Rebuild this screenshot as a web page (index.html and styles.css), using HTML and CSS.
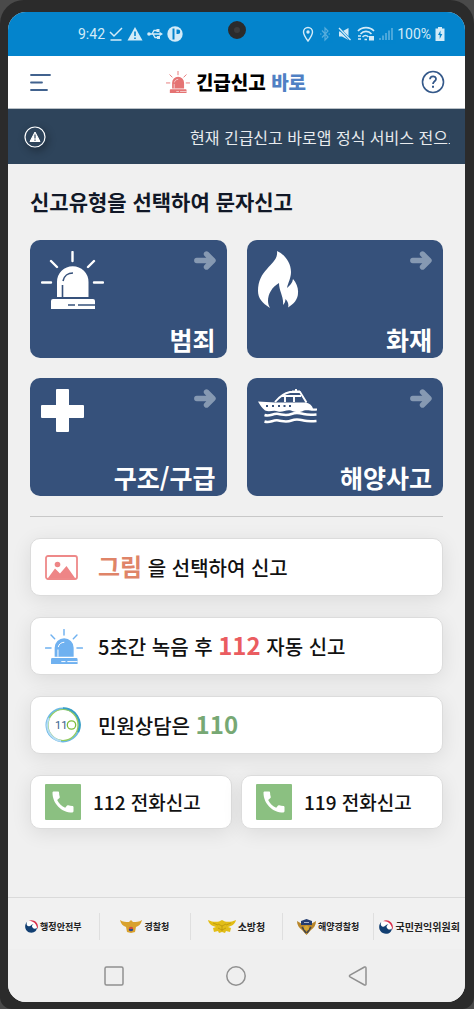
FILE: index.html
```html
<!DOCTYPE html>
<html lang="ko">
<head>
  <meta charset="UTF-8">
  <meta name="viewport" content="width=device-width, initial-scale=1.0">
  <title>긴급신고 바로</title>
  <link rel="stylesheet" href="styles.css">
</head>
<body>
  <!-- shared icons -->
  <svg class="sprite" aria-hidden="true">
    <symbol id="siren" viewBox="0 0 63 58">
      <path d="M31.5 1v9M10 10l6 6M53 10l-6 6M1 31.5h9M53 31.5h9" fill="none" stroke="currentColor" stroke-width="2.4" stroke-linecap="round"/>
      <path d="M16 46V31a15.7 15.7 0 0 1 31.5 0v15zM12 48h40a2 2 0 0 1 2 2v8H10v-8a2 2 0 0 1 2-2z" fill="currentColor"/>
      <path d="M21.5 46V34M22 30c1-5 5-8 10-8M27 54h7M37 54h17" fill="none" stroke="var(--cut)" stroke-width="1.6"/>
    </symbol>
    <symbol id="arrow" viewBox="0 0 22 19">
      <path d="M2.8 9.500h15M12.500 3l6.500 6.500-6.500 6.500" fill="none" stroke="currentColor" stroke-width="5.400" stroke-linecap="round" stroke-linejoin="round"/>
    </symbol>
    <symbol id="phone" viewBox="0 0 24 24">
      <path d="M20.010 15.380c-1.230 0-2.420-.2-3.530-.56a.98.98 0 0 0-1.010.24l-1.570 1.970c-2.830-1.350-5.480-3.900-6.890-6.830l1.950-1.660c.27-.28.35-.67.24-1.020-.37-1.110-.56-2.300-.56-3.530 0-.54-.45-.99-.99-.99H4.190C3.650 3 3 3.240 3 3.990 3 13.280 10.730 21 20.010 21c.71 0 .99-.63.99-1.180v-3.450c0-.54-.45-.99-.99-.99z" fill="currentColor"/>
    </symbol>
    <symbol id="taegeuk" viewBox="0 0 24 24">
      <circle cx="12" cy="12" r="11" fill="#fff"/>
      <path d="M7 2C16-3 27 6 23 17c-1-7-4-12-9-14-3-1-5-1-7-1z" fill="#d8304b"/>
      <path d="M4 3C-3 10 0 23 12 23.500c6 0 10-4 10-9.500-2 3-6 3-8 0-2-2-1-5 2-6-4-1-5 4-9 3.500C3 11 2 7 4 3z" fill="#123f72"/>
    </symbol>
  </svg>

  <div class="screen">
    <div class="status-bar">
      <div class="status-group">
        <span>9:42</span>
        <svg width="14" height="16" viewBox="0 0 14 16"><path d="M1 6l4 4 8-8M1.500 14h11" fill="none" stroke="currentColor" stroke-width="1.500"/></svg>
        <svg width="16" height="16" viewBox="0 0 16 16"><path d="M8 1l7.500 13.500H.5z" fill="currentColor"/><path d="M8 5.500v4.500M8 11.500v1.600" stroke="#0484cc" stroke-width="1.600"/></svg>
        <svg width="16" height="16" viewBox="0 0 16 16"><path d="M1 8h12M5 8l2-3.500h3M6 8l2 3.500h3" fill="none" stroke="currentColor" stroke-width="1.300"/><circle cx="2" cy="8" r="1.800" fill="currentColor"/><path d="M12.500 5.800L16 8l-3.500 2.200zM9.500 3h3v3h-3zM10 10h3v3h-3z" fill="currentColor"/></svg>
        <svg width="16" height="16" viewBox="0 0 16 16"><circle cx="8" cy="8" r="7.700" fill="currentColor"/><path d="M5.500 2.500h2v11h-2zM9.500 3.500h1.500a2 2 0 0 1 0 4.500H9.500z" fill="#0484cc"/></svg>
      </div>
      <span class="camera"></span>
      <div class="status-group">
        <svg width="12" height="16" viewBox="0 0 12 16"><path d="M6 15C3 11 1.500 8.500 1.500 6a4.500 4.500 0 0 1 9 0c0 2.500-1.500 5-4.500 9z" fill="none" stroke="currentColor" stroke-width="1.400"/><circle cx="6" cy="6" r="1.700" fill="currentColor"/></svg>
        <svg class="faded wide" width="10" height="16" viewBox="0 0 10 16"><path d="M2 4.500l6 6.500-3 3V2l3 3-6 6.500M0 8h1.500M8.500 8H10" fill="none" stroke="currentColor" stroke-width="1.200"/></svg>
        <svg class="wide" width="13" height="16" viewBox="0 0 13 16"><path d="M1 5.500h3L10.500 2v12L4 10.500H1z" fill="currentColor"/><path d="M.5 2l12 12" stroke="#0484cc" stroke-width="2.600"/><path d="M1 2l11.500 12" stroke="currentColor" stroke-width="1.300"/></svg>
        <svg width="18" height="16" viewBox="0 0 18 16"><path d="M1 5c4-4.500 12-4.500 16 0M3.500 8c3-3.500 8-3.500 11 0M5.500 11c2-2 4-2 6 0" fill="none" stroke="currentColor" stroke-width="1.600"/><path d="M1 10h3M1 13h3M7.500 13.500h2.500" stroke="currentColor" stroke-width="1.500"/><path d="M12 10h5v4.500h-5z" fill="currentColor"/></svg>
        <svg class="faded" width="14" height="16" viewBox="0 0 14 16"><path d="M1 14v-2M4 14V9.500M7 14V7M10 14V4.500M13 14V2" stroke="currentColor" stroke-width="1.700"/></svg>
        <span>100%</span>
        <svg width="10" height="16" viewBox="0 0 10 16"><path d="M3 1h4v1.500h2.500V15h-9V2.500H3z" fill="currentColor"/><path d="M5.500 4.500L3 9h1.700v4L7.300 8H5.500z" fill="#0484cc"/></svg>
      </div>
    </div>

    <header class="app-header">
      <button class="icon-button" type="button" aria-label="메뉴">
        <svg width="21" height="20" viewBox="0 0 21 20"><path d="M1 3h19M1 10.500h11M1 18h16" stroke="#41628e" stroke-width="1.800" stroke-linecap="round"/></svg>
      </button>
      <h1 class="brand">
        <svg class="brand-icon"><use href="#siren"/></svg>
        <span>긴급신고 <span class="brand-blue">바로</span></span>
      </h1>
      <button class="icon-button" type="button" aria-label="도움말">
        <svg width="24" height="24" viewBox="0 0 24 24" fill="none" stroke="#35598a"><circle cx="12" cy="12" r="10.500" stroke-width="1.600"/><path d="M9 9.300c.2-4 6-3.700 6-.3 0 2.300-3 2.300-3 5" stroke-width="1.800"/><path d="M12 15.800v2" stroke-width="2"/></svg>
      </button>
    </header>

    <div class="notice">
      <svg class="notice-icon" width="22" height="22" viewBox="0 0 22 22"><circle cx="11" cy="11" r="10" fill="none" stroke="#fff" stroke-width="1.200"/><path d="M11 6l5 9.500H6z" fill="#fff" stroke="#fff" stroke-linejoin="round"/><path d="M11 8.500v4M11 13.500v1.200" stroke="#2e445b" stroke-width="1.200"/></svg>
      <!-- ticker line, runs out of its box on the right -->
      <p class="notice-text">현재 긴급신고 바로앱 정식 서비스 전으로</p>
    </div>

    <main>
      <h2>신고유형을 선택하여 문자신고</h2>

      <div class="tiles">
        <button class="tile" type="button">
          <svg width="63" height="58"><use href="#siren"/></svg>
          <svg class="tile-arrow"><use href="#arrow"/></svg>
          <span class="tile-label">범죄</span>
        </button>
        <button class="tile" type="button">
          <svg width="41" height="58" viewBox="0 0 41 58"><path d="M19 0C26 3 33 11 33 21c0 6-3 11-4 16 3-3 5.500-5 6-9 3.500 4 5.500 9 5 14 0 6-4 11-10 14.500 1-3 0-6-2.500-8.500 0 2.500-1 4.500-2.500 6 1-8-4-14-4-22-7 4-11 11-11 18 0 3 1 5 2 7C4 52 0 47 0 40 0 30 4 23 9 18c5-6 11-10 10-18z" fill="#fff"/></svg>
          <svg class="tile-arrow"><use href="#arrow"/></svg>
          <span class="tile-label">화재</span>
        </button>
        <button class="tile" type="button">
          <svg width="43" height="43" viewBox="0 0 43 43"><path d="M16 0h11a1 1 0 0 1 1 1v15h14a1 1 0 0 1 1 1v11a1 1 0 0 1-1 1H28v13a1 1 0 0 1-1 1H16a1 1 0 0 1-1-1V29H1a1 1 0 0 1-1-1V17a1 1 0 0 1 1-1h14V1a1 1 0 0 1 1-1z" fill="#fff"/></svg>
          <svg class="tile-arrow"><use href="#arrow"/></svg>
          <span class="tile-label">구조/구급</span>
        </button>
        <button class="tile" type="button">
          <svg width="59" height="35" viewBox="0 0 59 35">
            <path d="M0 12.500l17 1h31c4 1 6 3 7 6h4v2c-6 1-8-1-13 0-4 2-8 2-13 0-5-1-8 2-13 1-5-2-8 1-13-1C4 19 2 16 0 12.500z" fill="#fff"/>
            <path d="M17 13c5-6 10-9 15-10h10l6.500 10.500M25 7h18M27 7v6M36 7v6M34 2.500h8M38 0v3" fill="none" stroke="#fff" stroke-width="1.900"/>
            <path d="M8 17h2M14 17h2M20 17h2M25.500 17h2M31 17h2" stroke="#36517b" stroke-width="2"/>
            <path d="M6.500 26c6 2 8-2 14-1s8 2 13 0 8-1 12 0 7 1 13 .5M6.500 32.500c6 2 8-2 14-1s8 2 13 0 8-1 12 0 7 1 13 .5" fill="none" stroke="#fff" stroke-width="2.500"/>
          </svg>
          <svg class="tile-arrow"><use href="#arrow"/></svg>
          <span class="tile-label">해양사고</span>
        </button>
      </div>

      <hr>

      <div class="cards">
        <button class="card" type="button">
          <span class="card-icon"><svg width="33" height="25" viewBox="0 0 33 25"><rect x="1" y="1" width="31" height="23" rx="2" fill="#fff" stroke="#ee8989" stroke-width="1.800"/><circle cx="12.500" cy="9.500" r="2.800" fill="#ee8586"/><path d="M3 23l7-9.500 5 5L21.500 11 30 23z" fill="#ee8586"/></svg></span>
          <span><strong class="orange">그림</strong> 을 선택하여 신고</span>
        </button>
        <button class="card" type="button">
          <span class="card-icon blue"><svg width="38" height="35"><use href="#siren"/></svg></span>
          <span>5초간 녹음 후 <strong class="red">112</strong> 자동 신고</span>
        </button>
        <a class="card" href="tel:110">
          <span class="card-icon"><svg width="36" height="36" viewBox="0 0 36 36">
            <circle cx="18" cy="18" r="16.500" fill="none" stroke="#6cb9e4" stroke-width="2"/>
            <path d="M18 1.500A16.500 16.500 0 0 1 33 25" fill="none" stroke="#3a9fc4" stroke-width="2.400"/>
            <ellipse cx="18" cy="18" rx="15" ry="15.500" fill="none" stroke="#93cc61" stroke-width="1.200"/>
            <path d="M4 11a16 16 0 0 0 12 23" fill="none" stroke="#b6dcf5" stroke-width="2"/>
            <text x="10" y="22" class="badge-number">11</text>
            <circle cx="26.500" cy="18" r="4.200" fill="none" stroke="#80bd3d" stroke-width="1.300"/>
          </svg></span>
          <span>민원상담은 <strong class="green">110</strong></span>
        </a>
        <div class="calls">
          <a class="card call" href="tel:112">
            <span class="call-icon"><svg width="28" height="28"><use href="#phone"/></svg></span>
            <span>112 전화신고</span>
          </a>
          <a class="card call" href="tel:119">
            <span class="call-icon"><svg width="28" height="28"><use href="#phone"/></svg></span>
            <span>119 전화신고</span>
          </a>
        </div>
      </div>
    </main>

    <footer class="agencies">
      <div class="agency"><svg width="13" height="13"><use href="#taegeuk"/></svg><span>행정안전부</span></div>
      <div class="agency">
        <svg width="22" height="13" viewBox="0 0 22 13"><path d="M0 0c3 2 6 2 9 2l2-2 2 2c3 0 6 0 9-2-1 4-3 6-6 7l-1 5-4 1-4-1-1-5C3 6 1 4 0 0z" fill="#d9a22e"/><circle cx="11" cy="9" r="2.200" fill="#cc4c3f"/><path d="M8.800 9a2.200 2.200 0 0 0 4.400 0z" fill="#284d90"/></svg>
        <span>경찰청</span>
      </div>
      <div class="agency">
        <svg width="28" height="13" viewBox="0 0 28 13"><path d="M0 0c4 2 8 2 11 1.500L14 0l3 1.500C20 2 24 2 28 0c-1 4-4 6-8 7l3 1-1 4-4-1-1 2-3-1-3 1-1-2-4 1-1-4 3-1C4 6 1 4 0 0z" fill="#e2bd16"/><path d="M10 4l4 2 4-2M10 8l4 2 4-2M14 6v5M5 3l5 2M23 3l-5 2" fill="none" stroke="#b38f0c" stroke-width=".7"/></svg>
        <span class="large">소방청</span>
      </div>
      <div class="agency">
        <svg width="19" height="16" viewBox="0 0 19 16"><path d="M0 2l5 3h9l5-3c0 4-2 7-5 9l-4.500 5L5 11C2 9 0 6 0 2z" fill="#b8862b"/><path d="M4 2l5.500-2L15 2v4H4z" fill="#243d70"/><path d="M7 3.500h5" stroke="#a8b3cc"/><path d="M5 8l4 6M14 8l-4 6" stroke="#44474c" stroke-width="1.500"/><circle cx="9.500" cy="9" r="2.500" fill="#d5a735"/></svg>
        <span>해양경찰청</span>
      </div>
      <div class="agency"><svg width="14" height="14"><use href="#taegeuk"/></svg><span class="large">국민권익위원회</span></div>
    </footer>

    <nav class="system-nav">
      <button class="icon-button" type="button" aria-label="최근 앱"><svg width="20" height="20" viewBox="0 0 20 20"><rect x="1" y="1" width="18" height="18" rx="1.500"/></svg></button>
      <button class="icon-button" type="button" aria-label="홈"><svg width="20" height="20" viewBox="0 0 20 20"><circle cx="10" cy="10" r="9.200"/></svg></button>
      <button class="icon-button" type="button" aria-label="뒤로"><svg width="20" height="20" viewBox="0 0 20 20"><path d="M16.500 1L2 9.200q-1.200.8 0 1.600L16.500 19q1.500.5 1.500-1V2q0-1.500-1.500-1z"/></svg></button>
    </nav>
  </div>
</body>
</html>
```

FILE: styles.css
```css
* {
  box-sizing: border-box;
}
html {
  background-color: #4a4a4a;
}
body {
  margin: 0;
  padding: 12px 9px 7px 8px;
  min-height: 100vh;
  display: flex;
  background-color: #2b2b2b;
  border-radius: 24px 24px 12px 12px;
  font-family: "Noto Sans CJK KR", sans-serif;
  color: #111;
}
svg {
  display: block;
  flex-shrink: 0;
}
h1, h2, p {
  margin: 0;
}
button {
  font-family: inherit;
  border: none;
  cursor: pointer;
}
.sprite {
  position: absolute;
  width: 0;
  height: 0;
}
.screen {
  flex: 1;
  min-width: 0;
  display: flex;
  flex-direction: column;
  background-color: #f0f0f0;
  border-radius: 18px;
  overflow: hidden;
}

/* phone status bar */
.status-bar {
  position: relative;
  height: 44px;
  padding: 0 20px 0 70px;
  display: flex;
  align-items: center;
  justify-content: space-between;
  background-color: #0484cc;
  color: #d3ebf8;
  font-family: Roboto, sans-serif;
  font-size: 14px;
}
.status-group {
  display: flex;
  align-items: center;
  gap: 4px;
}
.faded {
  opacity: 0.4;
}
.wide {
  margin: 0 2px;
}
.camera {
  position: absolute;
  top: 9px;
  left: 50%;
  width: 18px;
  height: 18px;
  margin-left: -9px;
  border: 6px solid #2b2b2b;
  border-radius: 50%;
  background-color: #3b3b3b;
}

.app-header {
  height: 53px;
  padding: 0 20px 0 22px;
  display: flex;
  align-items: center;
  justify-content: space-between;
  background-color: #fff;
  border-bottom: 1px solid #b9c0c6;
}
.icon-button {
  padding: 0;
  background: none;
}
.brand {
  display: flex;
  align-items: center;
  gap: 6px;
  font-size: 19px;
  line-height: 28px;
  font-weight: 900;
  color: #000;
}
.brand-icon {
  width: 24px;
  height: 22px;
  color: #e57373;
  --cut: #fff;
}
.brand-blue {
  color: #5080c4;
}

.notice {
  height: 55px;
  padding: 0 15px 0 16px;
  display: flex;
  align-items: center;
  gap: 144px;
  background-color: #2e445b;
}
.notice-icon {
  border-radius: 50%;
  box-shadow: 2px 3px 8px rgba(0, 0, 0, 0.3);
}
.notice-text {
  flex: 1;
  overflow: hidden;
  white-space: nowrap;
  font-size: 16px;
  line-height: 24px;
  color: #e8ebee;
}

main {
  flex: 1;
  padding: 22px;
}
h2 {
  font-size: 21px;
  line-height: 30px;
  font-weight: 700;
  color: #111827;
}
.tiles {
  margin-top: 24px;
  display: grid;
  grid-template-columns: 1fr 1fr;
  gap: 20px;
}
.tile {
  height: 118px;
  padding: 11px 11px 5px;
  display: grid;
  grid-template-columns: 1fr auto;
  grid-template-rows: 1fr auto;
  align-items: start;
  border-radius: 10px;
  background-color: #36517b;
  color: #fff;
  --cut: #36517b;
}
/* the icon is taller than its row and runs down beside the label */
.tile svg:first-child {
  grid-row: 1 / 3;
  grid-column: 1;
}
.tile-arrow {
  grid-column: 2;
  grid-row: 1;
  width: 22px;
  height: 19px;
  color: #8699b2;
}
.tile-label {
  grid-column: 1 / 3;
  grid-row: 2;
  text-align: right;
  font-size: 25px;
  line-height: 28px;
  font-weight: 700;
}
hr {
  margin: 20px 0 21px;
  border: none;
  border-top: 1px solid #c8c8c8;
}

.cards {
  display: flex;
  flex-direction: column;
  gap: 21px;
}
.card {
  height: 58px;
  padding: 0 14px;
  display: flex;
  align-items: center;
  gap: 15px;
  border: 1px solid #dcdcdc;
  border-radius: 10px;
  background-color: #fff;
  box-shadow: 0 4px 20px rgba(0, 0, 0, 0.09);
  color: #111;
  font-size: 20px;
  line-height: 28px;
  font-weight: 500;
  text-align: left;
  text-decoration: none;
  white-space: nowrap;
}
.card strong {
  font-size: 24px;
  font-weight: 700;
}
.card-icon {
  width: 38px;
}
.orange {
  color: #df8468;
}
.red {
  color: #ea5c60;
}
.green {
  color: #77a874;
}
.blue {
  color: #6fb1f0;
  --cut: #fff;
}
.badge-number {
  font-family: Roboto, sans-serif;
  font-size: 11px;
  font-weight: 400;
  fill: #31628b;
}
.calls {
  display: flex;
  gap: 9px;
}
.call {
  flex: 1;
  height: 54px;
  gap: 12px;
  font-size: 19px;
}
.call-icon {
  width: 36px;
  height: 36px;
  display: flex;
  align-items: center;
  justify-content: center;
  border-radius: 1px;
  background-color: #8bc081;
  color: #fff;
}

.agencies {
  height: 52px;
  padding: 15px 0 9px;
  display: flex;
  border-top: 1px solid #dadada;
  background-color: #f1f1f1;
}
.agency {
  flex: 1 1 0;
  display: flex;
  align-items: center;
  justify-content: center;
  gap: 2px;
  white-space: nowrap;
  font-size: 9px;
  line-height: 14px;
  font-weight: 700;
  color: #222;
}
.agency + .agency {
  border-left: 1px solid #dfdfdf;
}
.large {
  font-size: 10px;
}

.system-nav {
  height: 53px;
  padding: 0 97px 0 96px;
  display: flex;
  align-items: center;
  justify-content: space-between;
  background-color: #efefef;
}
.system-nav svg {
  fill: none;
  stroke: #909090;
  stroke-width: 1.5px;
}
```
